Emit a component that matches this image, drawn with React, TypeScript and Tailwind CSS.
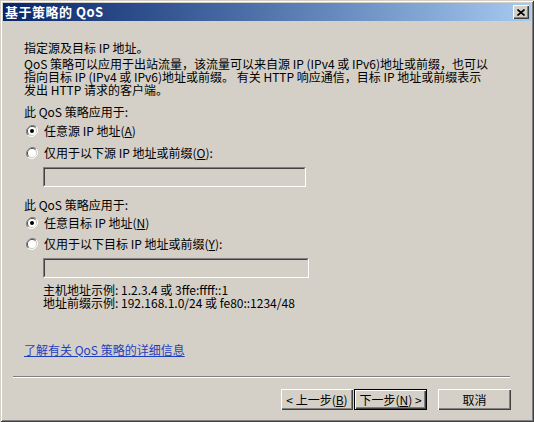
import React from "react";

const font = { fontFamily: '"Noto Sans CJK SC", "Liberation Sans", sans-serif' };

function Radio({ checked }: { checked?: boolean }) {
  return (
    <svg width="12" height="12" viewBox="0 0 12 12" className="shrink-0">
      <path d="M10.2 1.8 A6 6 0 0 0 1.8 10.2" fill="none" stroke="#808080" strokeWidth="1" />
      <path d="M9.5 2.5 A5 5 0 0 0 2.5 9.5" fill="none" stroke="#404040" strokeWidth="1" />
      <path d="M1.8 10.2 A6 6 0 0 0 10.2 1.8" fill="none" stroke="#ffffff" strokeWidth="1" />
      <path d="M2.5 9.5 A5 5 0 0 0 9.5 2.5" fill="none" stroke="#d4d0c8" strokeWidth="1" />
      <circle cx="6" cy="6" r="4" fill="#ffffff" />
      {checked && <circle cx="6" cy="6" r="2" fill="#000000" />}
    </svg>
  );
}

function Field({ w }: { w: string }) {
  return (
    <div className={`${w} h-[20px] bg-[#d4d0c8] border border-t-[#808080] border-l-[#808080] border-b-white border-r-white`}>
      <div className="h-full w-full border border-t-[#404040] border-l-[#404040] border-b-[#d4d0c8] border-r-[#d4d0c8]" />
    </div>
  );
}

function Option({ checked, children }: { checked?: boolean; children: React.ReactNode }) {
  return (
    <div className="flex items-center h-[12px] pl-[2px]">
      <Radio checked={checked} />
      <span className="ml-[6px] whitespace-nowrap">{children}</span>
    </div>
  );
}

function Btn({ children, def, w }: { children: React.ReactNode; def?: boolean; w: string }) {
  return (
    <div className={`${w} h-[21px] ${def ? "border border-black" : ""}`}>
      <div className="h-full w-full bg-[#d4d0c8] flex items-center justify-center shadow-[inset_1px_1px_#ffffff,inset_-1px_-1px_#404040,inset_-2px_-2px_#808080]">
        {children}
      </div>
    </div>
  );
}

export default function App() {
  return (
    <div
      style={font}
      className="w-[534px] h-[422px] bg-[#d4d0c8] p-[3px] flex flex-col text-[12px] leading-[12px] text-black shadow-[inset_1px_1px_#d4d0c8,inset_-1px_-1px_#404040,inset_2px_2px_#ffffff,inset_-2px_-2px_#808080]"
    >
      {/* title bar */}
      <div className="h-[18px] flex items-center justify-between pl-[2px] pr-[2px] bg-gradient-to-r from-[#0a246a] to-[#a6caf0]">
        <span className="text-white font-bold text-[13px] tracking-[0.5px]">基于策略的 QoS</span>
        <div className="w-[16px] h-[14px] bg-[#d4d0c8] flex items-center justify-center shadow-[inset_1px_1px_#ffffff,inset_-1px_-1px_#404040,inset_-2px_-2px_#808080]">
          <svg width="8" height="7" viewBox="0 0 8 7">
            <path d="M0.5 0.5 L7.5 6.5 M7.5 0.5 L0.5 6.5" stroke="#000" strokeWidth="1.6" />
          </svg>
        </div>
      </div>

      {/* body */}
      <div className="pl-[21px] flex flex-col">
        <div className="mt-[21px] whitespace-nowrap">指定源及目标 IP 地址。</div>
        <div className="mt-[3px] whitespace-nowrap leading-[13px]">
          QoS 策略可以应用于出站流量，该流量可以来自源 IP (IPv4 或 IPv6)地址或前缀，也可以
          <br />
          指向目标 IP (IPv4 或 IPv6)地址或前缀。 有关 HTTP 响应通信，目标 IP 地址或前缀表示
          <br />
          发出 HTTP 请求的客户端。
        </div>

        <div className="mt-[10px] whitespace-nowrap">此 QoS 策略应用于:</div>
        <div className="mt-[7px]">
          <Option checked>
            任意源 IP 地址(<u>A</u>)
          </Option>
        </div>
        <div className="mt-[10px]">
          <Option>
            仅用于以下源 IP 地址或前缀(<u>O</u>):
          </Option>
        </div>
        <div className="mt-[8px] pl-[19px]">
          <Field w="w-[263px]" />
        </div>

        <div className="mt-[12px] whitespace-nowrap">此 QoS 策略应用于:</div>
        <div className="mt-[6px]">
          <Option checked>
            任意目标 IP 地址(<u>N</u>)
          </Option>
        </div>
        <div className="mt-[9px]">
          <Option>
            仅用于以下目标 IP 地址或前缀(<u>Y</u>):
          </Option>
        </div>
        <div className="mt-[8px] pl-[19px]">
          <Field w="w-[266px]" />
        </div>

        <div className="mt-[5px] pl-[19px] whitespace-nowrap leading-[13px]">
          主机地址示例: 1.2.3.4 或 3ffe:ffff::1
          <br />
          地址前缀示例: 192.168.1.0/24 或 fe80::1234/48
        </div>

        <div className="mt-[35px]">
          <span className="underline text-[#1f3fbf] whitespace-nowrap">了解有关 QoS 策略的详细信息</span>
        </div>
      </div>

      {/* separator */}
      <div className="mt-[20px] ml-[10px] w-[497px] h-[2px] border-t border-t-[#808080] border-b border-b-white" />

      {/* buttons */}
      <div className="mt-[11px] flex justify-end pr-[20px]">
        <Btn w="w-[72px]">
          &lt; 上一步(<u>B</u>)
        </Btn>
        <div className="w-[1px]" />
        <Btn def w="w-[73px]">
          下一步(<u>N</u>) &gt;
        </Btn>
        <div className="w-[11px]" />
        <Btn w="w-[73px]">取消</Btn>
      </div>
    </div>
  );
}
